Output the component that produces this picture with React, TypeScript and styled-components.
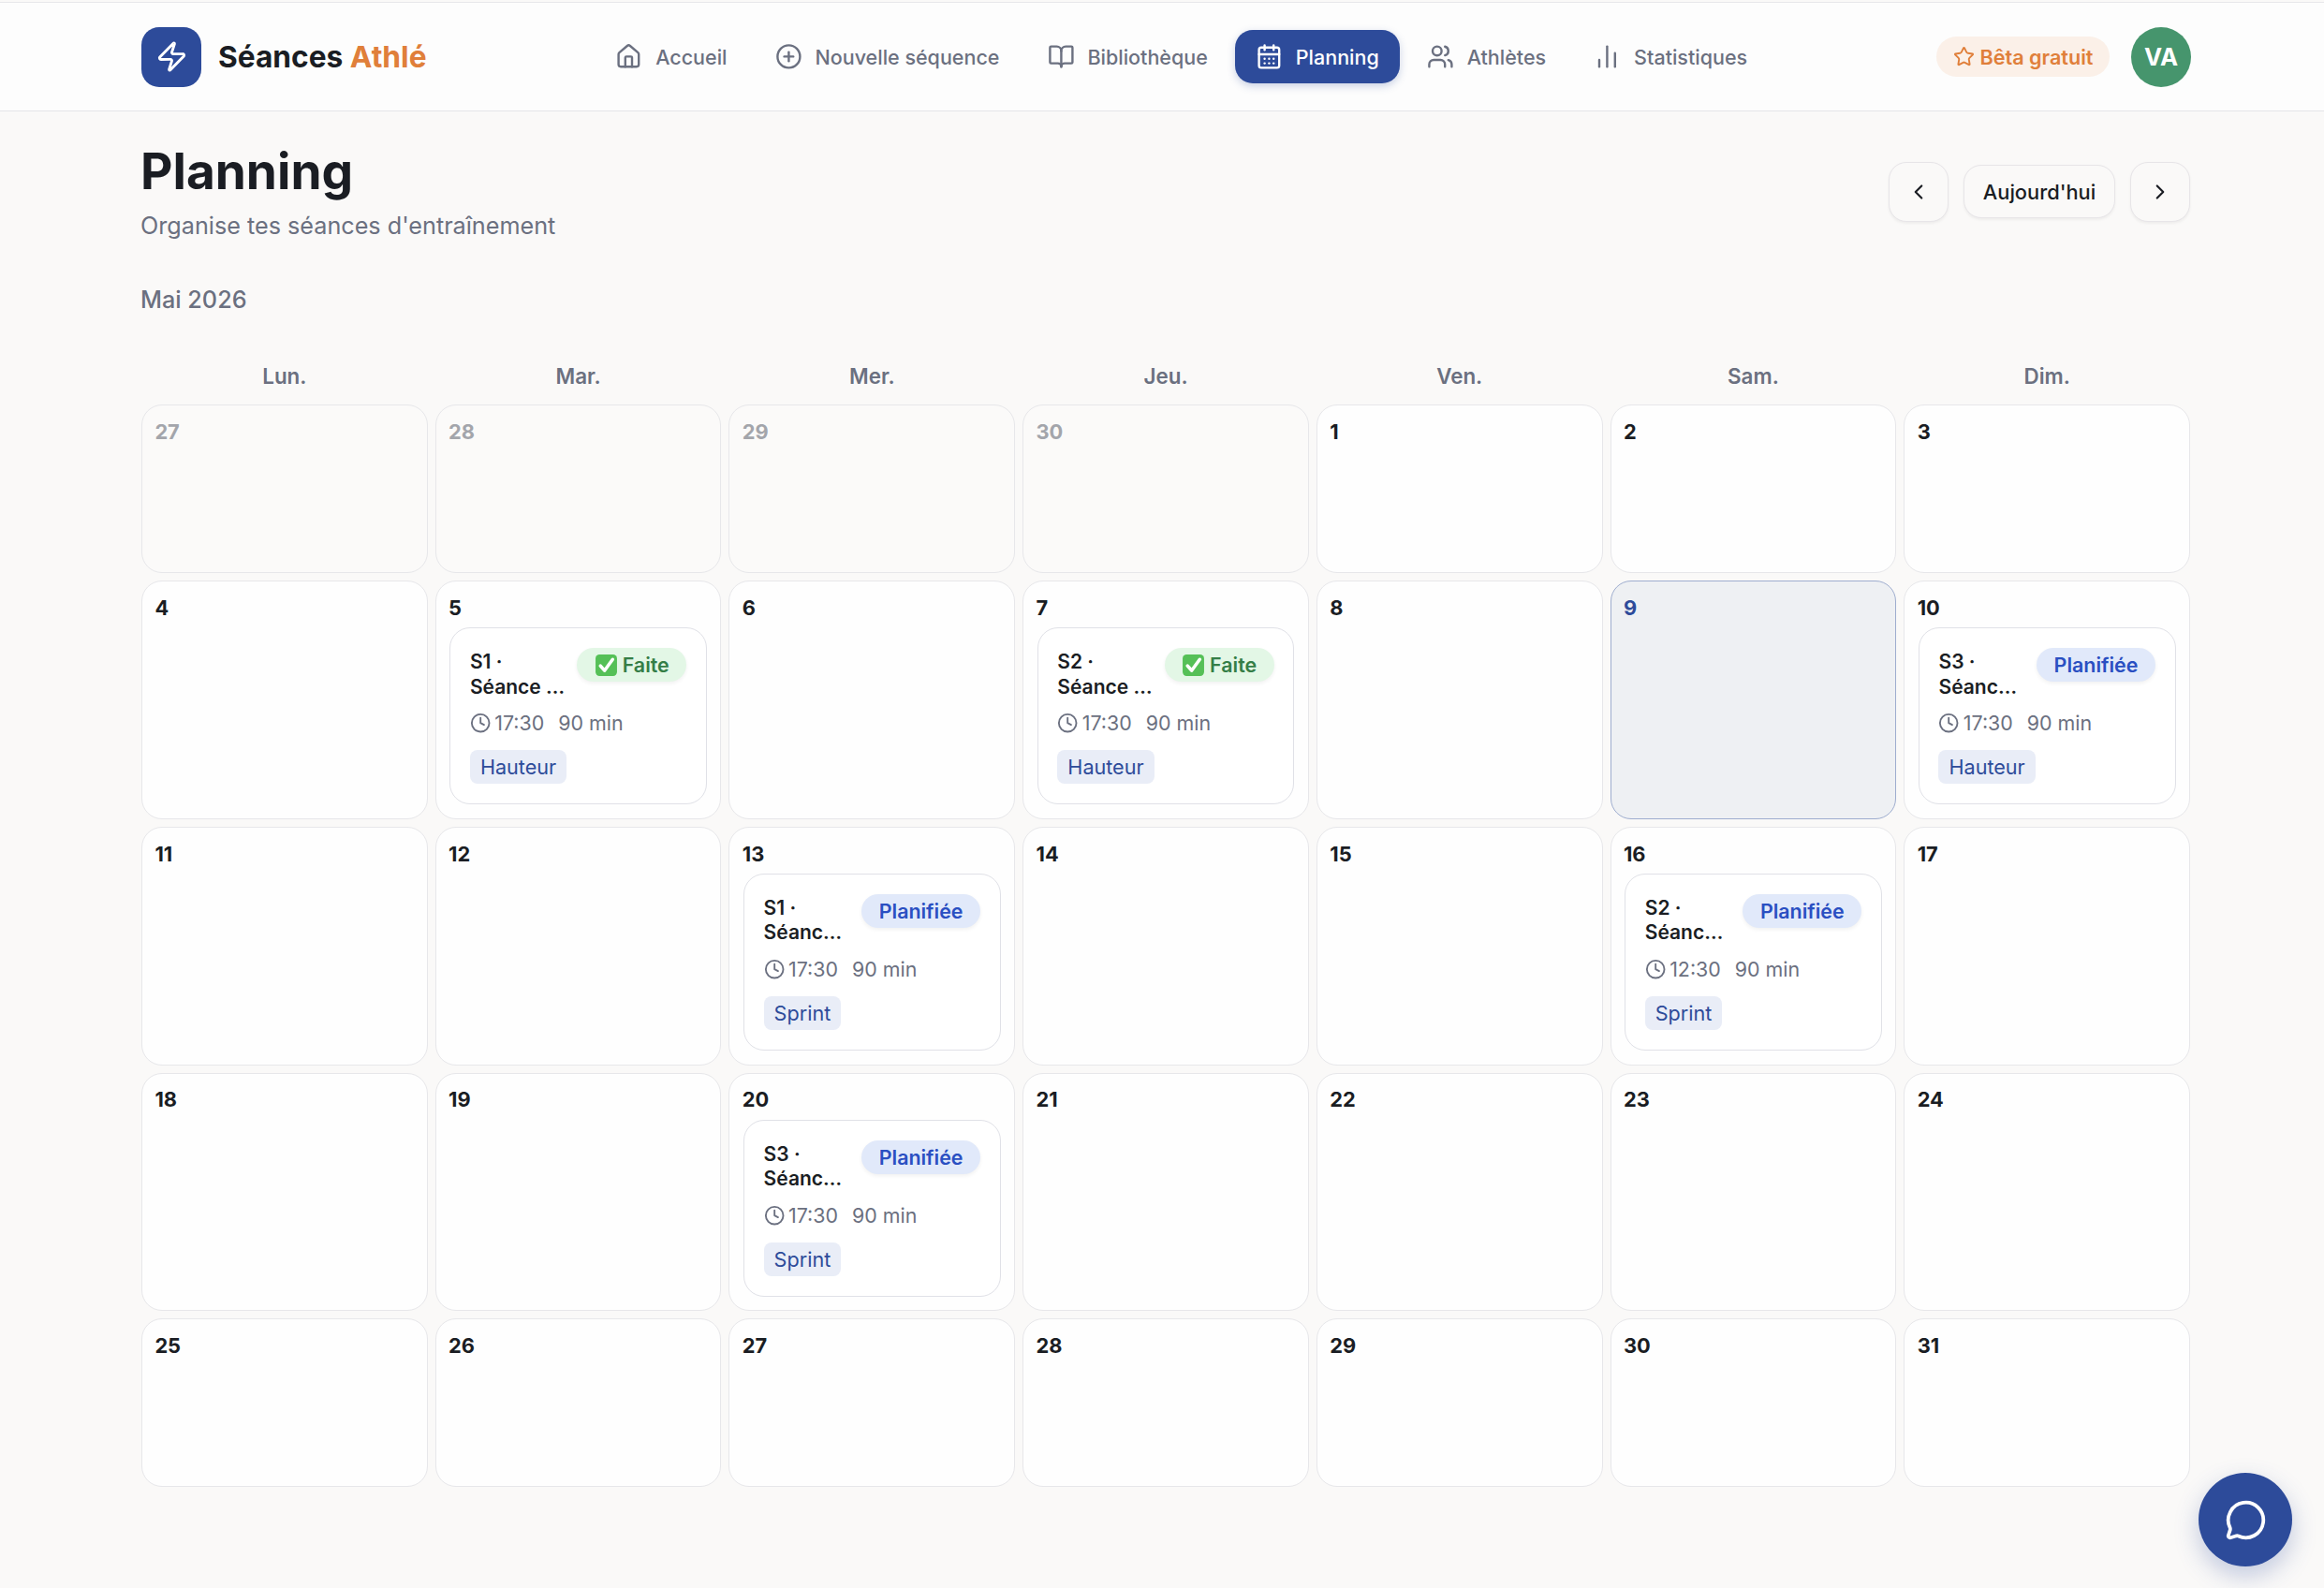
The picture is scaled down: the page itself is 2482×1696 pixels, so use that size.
import React from 'react';
import styled, { createGlobalStyle } from 'styled-components';
import {
  House,
  CirclePlus,
  BookOpen,
  CalendarDays,
  Users,
  ChartNoAxesColumn,
  Star,
  Zap,
  ChevronLeft,
  ChevronRight,
  Clock,
  MessageCircle,
} from 'lucide-react';

const GlobalStyle = createGlobalStyle`
  html, body {
    margin: 0;
    padding: 0;
    background: #faf9f8;
    color: #1a1d23;
    font-family: Inter, "Liberation Sans", sans-serif;
  }
  * { box-sizing: border-box; }
`;

const Page = styled.div`
  height: 1696px;
  overflow: hidden;
  padding-top: 2px;
`;

const Header = styled.header`
  height: 117px;
  background: #fdfdfd;
  border-top: 1.6px solid #e7e7ea;
  border-bottom: 1.6px solid #e5e5e8;
  padding: 0 142px 0 151px;
  display: flex;
  align-items: center;
  justify-content: space-between;
`;

const Brand = styled.div`
  display: flex;
  align-items: center;
  gap: 18px;
`;

const LogoMark = styled.div`
  width: 64px;
  height: 64px;
  border-radius: 19px;
  background: #2d4b9a;
  color: #fff;
  display: flex;
  align-items: center;
  justify-content: center;
`;

const BrandName = styled.div`
  font-size: 31.7px;
  font-weight: 700;
  color: #1a1d23;
  span { color: #e07f3a; }
`;

const Nav = styled.nav`
  display: flex;
  align-items: center;
  gap: 6.4px;
`;

const NavItem = styled.a<{ $active?: boolean }>`
  height: 57px;
  padding: 0 22.4px;
  border-radius: 19px;
  display: flex;
  align-items: center;
  gap: 14px;
  font-size: 21.5px;
  font-weight: 500;
  color: ${({ $active }) => ($active ? '#fff' : '#6b7080')};
  background: ${({ $active }) => ($active ? '#2d4b9a' : 'transparent')};
  box-shadow: ${({ $active }) => ($active ? '0 3px 8px rgba(45, 75, 154, 0.25)' : 'none')};
`;

const HeaderRight = styled.div`
  display: flex;
  align-items: center;
  gap: 23px;
`;

const BetaPill = styled.div`
  height: 43px;
  width: 185px;
  border-radius: 22px;
  background: #fbf0e8;
  color: #e07f3a;
  font-size: 21.6px;
  font-weight: 600;
  display: flex;
  align-items: center;
  justify-content: center;
  gap: 6px;
`;

const Avatar = styled.div`
  width: 64px;
  height: 64px;
  border-radius: 50%;
  background: #46956d;
  color: #fff;
  font-size: 25.6px;
  font-weight: 700;
  display: flex;
  align-items: center;
  justify-content: center;
`;

const Main = styled.main`
  padding: 33px 143px 0 151px;
`;

const TitleRow = styled.div`
  display: flex;
  align-items: center;
  justify-content: space-between;
`;

const Title = styled.h1`
  margin: 0 0 0 -1px;
  font-size: 53.2px;
  line-height: 62px;
  font-weight: 700;
  color: #1a1d23;
`;

const Subtitle = styled.p`
  margin: 11px 0 0 -1px;
  font-size: 25.2px;
  line-height: 32px;
  color: #6b7080;
`;

const Controls = styled.div`
  display: flex;
  align-items: center;
  gap: 16px;
`;

const CtrlButton = styled.button`
  height: 64px;
  width: 64px;
  border: 1.6px solid #e7e5e8;
  border-radius: 19px;
  background: #faf9f8;
  color: #1a1d23;
  box-shadow: 0 1.6px 3px rgba(0, 0, 0, 0.05);
  display: flex;
  align-items: center;
  justify-content: center;
  padding: 0;
`;

const TodayButton = styled(CtrlButton)`
  height: 57px;
  width: 162px;
  font-family: inherit;
  font-size: 21.8px;
  font-weight: 500;
`;

const Month = styled.div`
  margin: 47px 0 0 -1px;
  font-size: 25.2px;
  line-height: 32px;
  font-weight: 500;
  color: #6b7080;
`;

const Grid = styled.div`
  margin-top: 52px;
  display: grid;
  grid-template-columns: repeat(7, minmax(0, 1fr));
  gap: 8px;
`;

const Weekday = styled.div`
  text-align: center;
  font-size: 22.4px;
  line-height: 28px;
  font-weight: 600;
  color: #6b7080;
  margin-bottom: 8px;
`;

const Cell = styled.div<{ $muted?: boolean; $today?: boolean }>`
  min-height: 180px;
  padding: 14.4px;
  border: 1.6px solid ${({ $today }) => ($today ? '#9eadcf' : '#e7e7ea')};
  border-radius: 22px;
  background: ${({ $muted, $today }) => ($today ? '#eef0f3' : $muted ? '#fbfaf9' : '#fefefe')};
`;

const DayNumber = styled.div<{ $muted?: boolean; $today?: boolean }>`
  margin: 0.5px 0 -0.5px -1px;
  font-size: 21.8px;
  line-height: 26px;
  font-weight: 700;
  color: ${({ $muted, $today }) => ($today ? '#2d4b9a' : $muted ? '#a3a5ab' : '#1a1d23')};
`;

const SessionCard = styled.div`
  margin: 9px 0 0.4px;
  padding: 20.8px;
  border: 1.6px solid #e0e1e7;
  border-radius: 22px;
  background: #fff;
`;

const SessionTop = styled.div`
  display: flex;
  align-items: flex-start;
  justify-content: space-between;
  gap: 6px;
`;

const SessionTitle = styled.div`
  flex: 1;
  min-width: 0;
  margin-top: 2px;
  font-size: 21px;
  line-height: 26.5px;
  font-weight: 600;
  color: #1a1d23;
`;

const StatusBadge = styled.span<{ $done?: boolean }>`
  flex-shrink: 0;
  height: 36px;
  padding: 0 18.5px;
  border-radius: 18px;
  display: flex;
  align-items: center;
  gap: 5px;
  font-size: 21.4px;
  font-weight: 600;
  color: ${({ $done }) => ($done ? '#357e47' : '#2a4fc2')};
  background: ${({ $done }) => ($done ? '#e3f7e6' : '#e1e9fa')};
  box-shadow: 0 2px 4px rgba(0, 0, 0, 0.06);
`;

const TimeRow = styled.div`
  margin-top: 12px;
  display: flex;
  align-items: center;
  font-size: 21.4px;
  line-height: 26px;
  color: #6b7080;
  svg { margin-right: 4px; }
`;

const Duration = styled.span`
  margin-left: 15px;
`;

const Tag = styled.span`
  display: inline-flex;
  align-items: center;
  height: 36px;
  margin-top: 16px;
  padding: 0 11px;
  border-radius: 8px;
  background: #e9edf7;
  color: #2d4b9a;
  font-size: 21.6px;
`;

const ChatButton = styled.button`
  position: fixed;
  right: 34px;
  bottom: 23px;
  width: 100px;
  height: 100px;
  border: 0;
  border-radius: 50%;
  background: #2d4b9a;
  color: #fff;
  box-shadow: 0 10px 26px rgba(45, 75, 154, 0.28);
  display: flex;
  align-items: center;
  justify-content: center;
`;

const DoneEmoji = () => (
  <svg width="25" height="25" viewBox="0 0 24 24" aria-hidden="true">
    <rect x="1" y="1" width="22" height="22" rx="4" fill="#55c057" />
    <path d="M6 12.5l4.2 5L18.5 6" fill="none" stroke="#fff" strokeWidth="3.4" strokeLinecap="round" strokeLinejoin="round" />
  </svg>
);

type Session = {
  title: string;
  time: string;
  tag: string;
  done?: boolean;
};

const sessions: Record<number, Session> = {
  5: { title: 'S1 · Séance …', time: '17:30', tag: 'Hauteur', done: true },
  7: { title: 'S2 · Séance …', time: '17:30', tag: 'Hauteur', done: true },
  10: { title: 'S3 · Séanc…', time: '17:30', tag: 'Hauteur' },
  13: { title: 'S1 · Séanc…', time: '17:30', tag: 'Sprint' },
  16: { title: 'S2 · Séanc…', time: '12:30', tag: 'Sprint' },
  20: { title: 'S3 · Séanc…', time: '17:30', tag: 'Sprint' },
};

const weekdays = ['Lun.', 'Mar.', 'Mer.', 'Jeu.', 'Ven.', 'Sam.', 'Dim.'];

const navItems = [
  { label: 'Accueil', icon: House },
  { label: 'Nouvelle séquence', icon: CirclePlus },
  { label: 'Bibliothèque', icon: BookOpen },
  { label: 'Planning', icon: CalendarDays, active: true },
  { label: 'Athlètes', icon: Users },
  { label: 'Statistiques', icon: ChartNoAxesColumn },
];

const days = [27, 28, 29, 30, ...Array.from({ length: 31 }, (_, i) => i + 1)];

const App: React.FC = () => (
  <Page>
    <GlobalStyle />
    <Header>
      <Brand>
        <LogoMark>
          <Zap size={35} strokeWidth={2} />
        </LogoMark>
        <BrandName>
          Séances <span>Athlé</span>
        </BrandName>
      </Brand>
      <Nav>
        {navItems.map(({ label, icon: Icon, active }) => (
          <NavItem key={label} $active={active}>
            <Icon size={28.8} strokeWidth={2} />
            {label}
          </NavItem>
        ))}
      </Nav>
      <HeaderRight>
        <BetaPill>
          <Star size={23} strokeWidth={2} />
          Bêta gratuit
        </BetaPill>
        <Avatar>VA</Avatar>
      </HeaderRight>
    </Header>
    <Main>
      <TitleRow>
        <div>
          <Title>Planning</Title>
          <Subtitle>Organise tes séances d'entraînement</Subtitle>
        </div>
        <Controls>
          <CtrlButton>
            <ChevronLeft size={26} />
          </CtrlButton>
          <TodayButton>Aujourd'hui</TodayButton>
          <CtrlButton>
            <ChevronRight size={26} />
          </CtrlButton>
        </Controls>
      </TitleRow>
      <Month>Mai 2026</Month>
      <Grid>
        {weekdays.map((d) => (
          <Weekday key={d}>{d}</Weekday>
        ))}
        {days.map((day, i) => {
          const muted = i < 4;
          const today = !muted && day === 9;
          const session = muted ? undefined : sessions[day];
          return (
            <Cell key={i} $muted={muted} $today={today}>
              <DayNumber $muted={muted} $today={today}>
                {day}
              </DayNumber>
              {session && (
                <SessionCard>
                  <SessionTop>
                    <SessionTitle>{session.title}</SessionTitle>
                    <StatusBadge $done={session.done}>
                      {session.done && <DoneEmoji />}
                      {session.done ? 'Faite' : 'Planifiée'}
                    </StatusBadge>
                  </SessionTop>
                  <TimeRow>
                    <Clock size={22.4} strokeWidth={2} />
                    {session.time}
                    <Duration>90 min</Duration>
                  </TimeRow>
                  <Tag>{session.tag}</Tag>
                </SessionCard>
              )}
            </Cell>
          );
        })}
      </Grid>
    </Main>
    <ChatButton>
      <MessageCircle size={45} strokeWidth={2} />
    </ChatButton>
  </Page>
);

export default App;
